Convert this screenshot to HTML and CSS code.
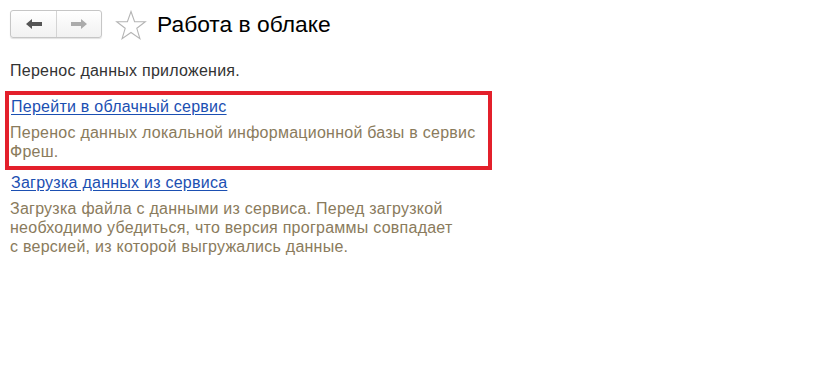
FILE: index.html
```html
<!DOCTYPE html>
<html lang="ru">
<head>
<meta charset="utf-8">
<link rel="stylesheet" href="styles.css">
</head>
<body>
<div class="page">
  <div class="header">
    <div class="nav">
      <button class="nav-btn nav-back" type="button">
        <svg width="18" height="12" viewBox="0 0 18 12"><path d="M1 6 L7 1 L7 4 L17 4 L17 8 L7 8 L7 11 Z" fill="#555"/></svg>
      </button>
      <button class="nav-btn nav-fwd" type="button">
        <svg width="18" height="12" viewBox="0 0 18 12"><path d="M17 6 L11 1 L11 4 L1 4 L1 8 L11 8 L11 11 Z" fill="#ababab"/></svg>
      </button>
    </div>
    <svg class="star" width="32" height="30" viewBox="0 0 32 30"><path d="M16 1.5 L19.6 11.6 L30.3 11.8 L21.8 18.3 L24.9 28.6 L16 22.5 L7.1 28.6 L10.2 18.3 L1.7 11.8 L12.4 11.6 Z" fill="none" stroke="#b4b4b4" stroke-width="1.1" stroke-linejoin="miter"/></svg>
    <h1 class="title">Работа в облаке</h1>
  </div>
  <p class="intro">Перенос данных приложения.</p>
  <div class="items">
    <div class="item item-highlighted">
      <a class="item-link" href="#">Перейти в облачный сервис</a>
      <p class="item-desc">Перенос данных локальной информационной базы в сервис Фреш.</p>
    </div>
    <div class="item">
      <a class="item-link" href="#">Загрузка данных из сервиса</a>
      <p class="item-desc">Загрузка файла с данными из сервиса. Перед загрузкой необходимо убедиться, что версия программы совпадает с&nbsp;версией, из которой выгружались данные.</p>
    </div>
  </div>
</div>
</body>
</html>
```
FILE: styles.css
```css
*, *::before, *::after { box-sizing: border-box; }
html, body { margin: 0; padding: 0; background: #fff; }
body {
  font-family: "Liberation Sans", Arial, sans-serif;
  font-size: 16px;
  line-height: 19px;
  letter-spacing: 0.25px;
  color: #333;
}
.page { padding: 10px; }
.header {
  display: flex;
  align-items: center;
  height: 28px;
}
.nav {
  display: flex;
  height: 28px;
  border: 1px solid #c6c6c6;
  border-radius: 3px;
  background: linear-gradient(#ffffff, #f1f1f1);
  box-shadow: 0 1px 1px rgba(0,0,0,0.12);
}
.nav-btn {
  height: 26px;
  border: 0;
  padding: 0;
  margin: 0;
  background: transparent;
  display: flex;
  align-items: center;
  justify-content: center;
}
.nav-back { width: 46px; border-right: 1px solid #d4d4d4; }
.nav-fwd { width: 44px; }
.star { margin-left: 13px; margin-top: 2px; }
.title {
  margin: 0 0 0 10px;
  font-size: 22.8px;
  letter-spacing: 0;
  font-weight: normal;
  color: #000;
  line-height: 28px;
}
.intro { margin: 23px 0 0 0; color: #333; }
.items {
  margin-top: 17px;
  width: 474px;
  display: flex;
  flex-direction: column;
  gap: 12px;
}
.item { position: relative; padding-left: 1px; }
.item-highlighted::after {
  content: "";
  position: absolute;
  left: -5px;
  top: -6px;
  width: 487px;
  height: 79px;
  border: 4.5px solid #e3202b;
  pointer-events: none;
}
.item-link {
  display: inline-block;
  color: #1b4fb2;
  text-decoration: underline;
  text-underline-offset: 2px;
}
.item-desc {
  margin: 7px 0 0 -1px;
  color: #8a7b5c;
}
```
